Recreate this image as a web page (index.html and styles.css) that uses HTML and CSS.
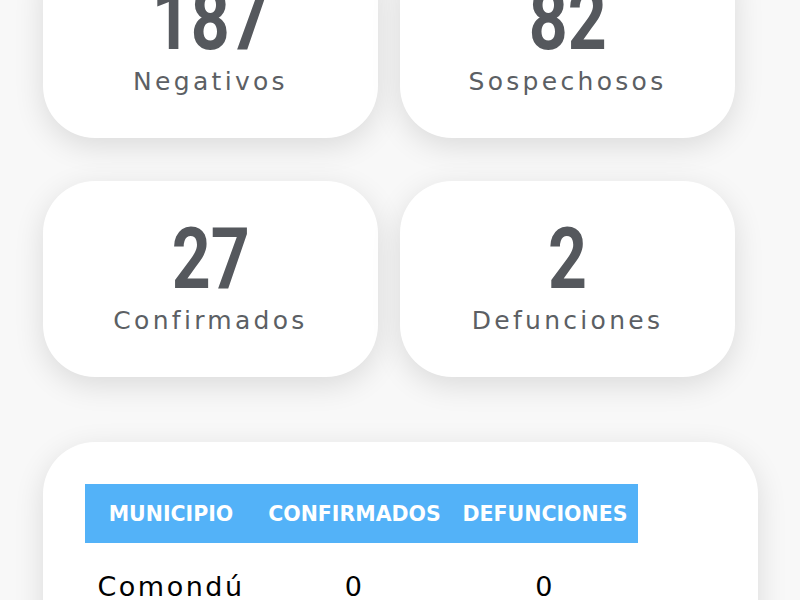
FILE: index.html
```html
<!DOCTYPE html>
<html lang="es">
<head>
  <meta charset="UTF-8" />
  <title>COVID-19 BCS</title>
  <link rel="stylesheet" href="styles.css">
</head>
<body>
  <div class="page">
    <div class="stats">
      <div class="card">
        <div class="num">187</div>
        <div class="label">Negativos</div>
      </div>
      <div class="card">
        <div class="num">82</div>
        <div class="label">Sospechosos</div>
      </div>
      <div class="card">
        <div class="num">27</div>
        <div class="label">Confirmados</div>
      </div>
      <div class="card">
        <div class="num">2</div>
        <div class="label">Defunciones</div>
      </div>
    </div>

    <div class="table-card">
      <table>
        <thead>
          <tr>
            <th class="c1">MUNICIPIO</th>
            <th class="c2">CONFIRMADOS</th>
            <th class="c3">DEFUNCIONES</th>
          </tr>
        </thead>
        <tbody>
          <tr><td>Comondú</td><td>0</td><td>0</td></tr>
          <tr><td>Mulegé</td><td>0</td><td>0</td></tr>
          <tr><td>La Paz</td><td>8</td><td>1</td></tr>
        </tbody>
      </table>
    </div>
  </div>
</body>
</html>
```

FILE: styles.css
```css
body {
  margin: 0;
  background: #f8f8f8;
  font-family: "DejaVu Sans", Verdana, sans-serif;
}
.page {
  margin-top: -58px;
  padding-left: 43px;
}
.stats {
  width: 692px;
  display: grid;
  grid-template-columns: 1fr 1fr;
  column-gap: 22px;
  row-gap: 43px;
}
.card {
  background: #fff;
  border-radius: 52px;
  box-shadow: 0 8px 30px rgba(0, 0, 0, 0.12);
  padding: 36px 0 44px;
  text-align: center;
}
/* roboto bold squeezed to look like a condensed face */
.num {
  display: inline-block;
  transform: scaleX(0.8);
  font-family: Roboto, "DejaVu Sans Condensed", sans-serif;
  font-weight: bold;
  font-size: 85px;
  line-height: 84px;
  color: #55585d;
}
.label {
  margin-top: 7px;
  font-size: 25px;
  line-height: 1;
  letter-spacing: 3.3px;
  color: #5c5f64;
}
.table-card {
  width: 631px;
  margin-top: 65px;
  padding: 42px;
  background: #fff;
  border-radius: 52px;
  box-shadow: 0 8px 30px rgba(0, 0, 0, 0.12);
}
table {
  border-collapse: collapse;
}
th {
  height: 59px;
  padding: 0;
  background: #53b2f8;
  color: #fff;
  font-size: 20.5px;
  font-weight: bold;
}
.c1 { width: 172px; }
.c2 { width: 195px; }
.c3 { width: 186px; }
td {
  padding: 28px 0;
  text-align: center;
  font-size: 27px;
  letter-spacing: 2.5px;
  color: #000;
}
```
